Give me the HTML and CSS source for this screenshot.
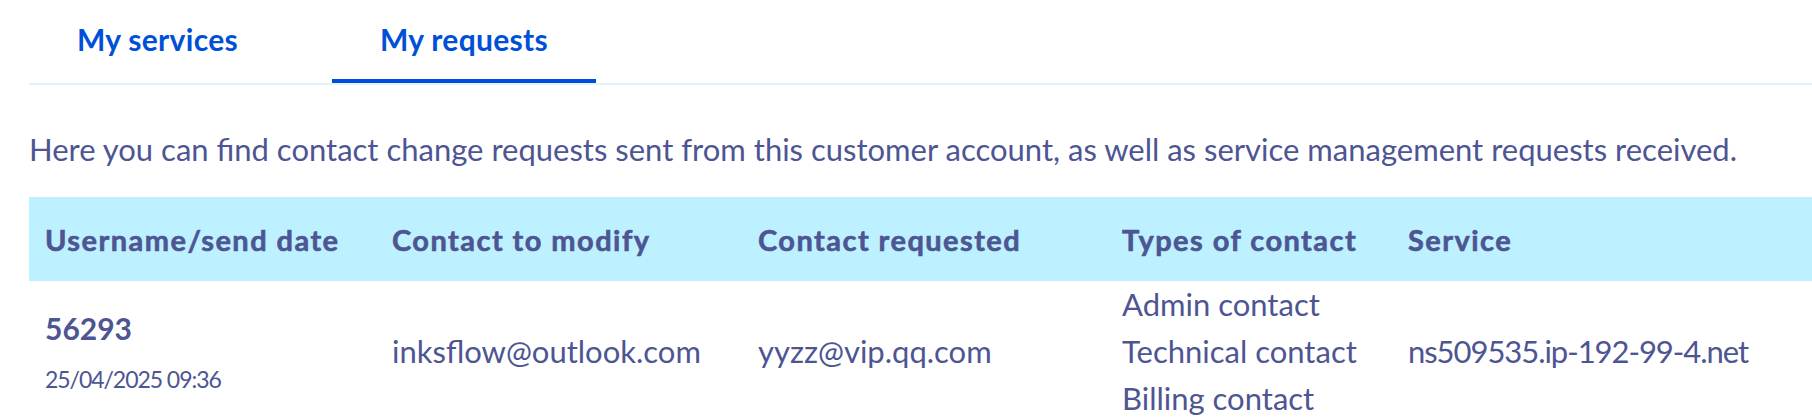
FILE: index.html
```html
<!DOCTYPE html>
<html lang="en">
<head>
<meta charset="utf-8">
<title>My requests</title>
<link rel="stylesheet" href="styles.css">
</head>
<body>
<main class="page">
  <nav class="tabs">
    <a class="tab" href="#">My services</a>
    <a class="tab tab-active" href="#">My requests</a>
  </nav>
  <p class="intro">Here you can find contact change requests sent from this customer account, as well as service management requests received.</p>
  <table class="requests">
    <colgroup>
      <col class="c1"><col class="c2"><col class="c3"><col class="c4"><col class="c5">
    </colgroup>
    <thead>
      <tr>
        <th>Username/send date</th>
        <th>Contact to modify</th>
        <th>Contact requested</th>
        <th>Types of contact</th>
        <th>Service</th>
      </tr>
    </thead>
    <tbody>
      <tr>
        <td>
          <div class="user">56293</div>
          <div class="date">25/04/2025 09:36</div>
        </td>
        <td>inksflow@outlook.com</td>
        <td>yyzz@vip.qq.com</td>
        <td class="types">
          <div>Admin contact</div>
          <div>Technical contact</div>
          <div>Billing contact</div>
        </td>
        <td class="service">ns509535.ip-192-99-4.net</td>
      </tr>
    </tbody>
  </table>
</main>
</body>
</html>
```

FILE: styles.css
```css
html, body {
  margin: 0;
  padding: 0;
  background: #ffffff;
}

body {
  font-family: "Lato", "Liberation Sans", sans-serif;
  color: #4d5592;
}

.page {
  padding-left: 29px;
}

.tabs {
  display: flex;
  gap: 46px;
  border-bottom: 2px solid #e4f2fb;
}

.tab {
  display: block;
  padding: 21px 48px 22px;
  font-size: 30px;
  line-height: 36px;
  font-weight: 700;
  letter-spacing: 0.3px;
  color: #0050d7;
  text-decoration: none;
  border-bottom: 4px solid transparent;
}

.tab-active {
  border-bottom-color: #0050d7;
}

.intro {
  margin: 42px 0 25px;
  font-size: 31px;
  line-height: 45px;
}

.requests {
  width: 100%;
  border-collapse: collapse;
  table-layout: fixed;
}

.c1 { width: 347px; }
.c2 { width: 366px; }
.c3 { width: 364px; }
.c4 { width: 286px; }

.requests th {
  height: 84px;
  padding: 0 16px;
  background: #bef1ff;
  text-align: left;
  font-size: 29px;
  font-weight: 700;
  letter-spacing: 1.45px;
  -webkit-text-stroke: 0.6px currentColor;
  vertical-align: middle;
  white-space: nowrap;
}

.requests td {
  padding: 0 16px;
  font-size: 31px;
  line-height: 47px;
  vertical-align: middle;
  white-space: nowrap;
}

.requests td.service {
  letter-spacing: -1.05px;
}

.user {
  font-weight: 700;
  font-size: 30px;
  line-height: 40px;
}

.date {
  margin-top: 15px;
  font-size: 23px;
  line-height: 32px;
  letter-spacing: -1.05px;
}
```
